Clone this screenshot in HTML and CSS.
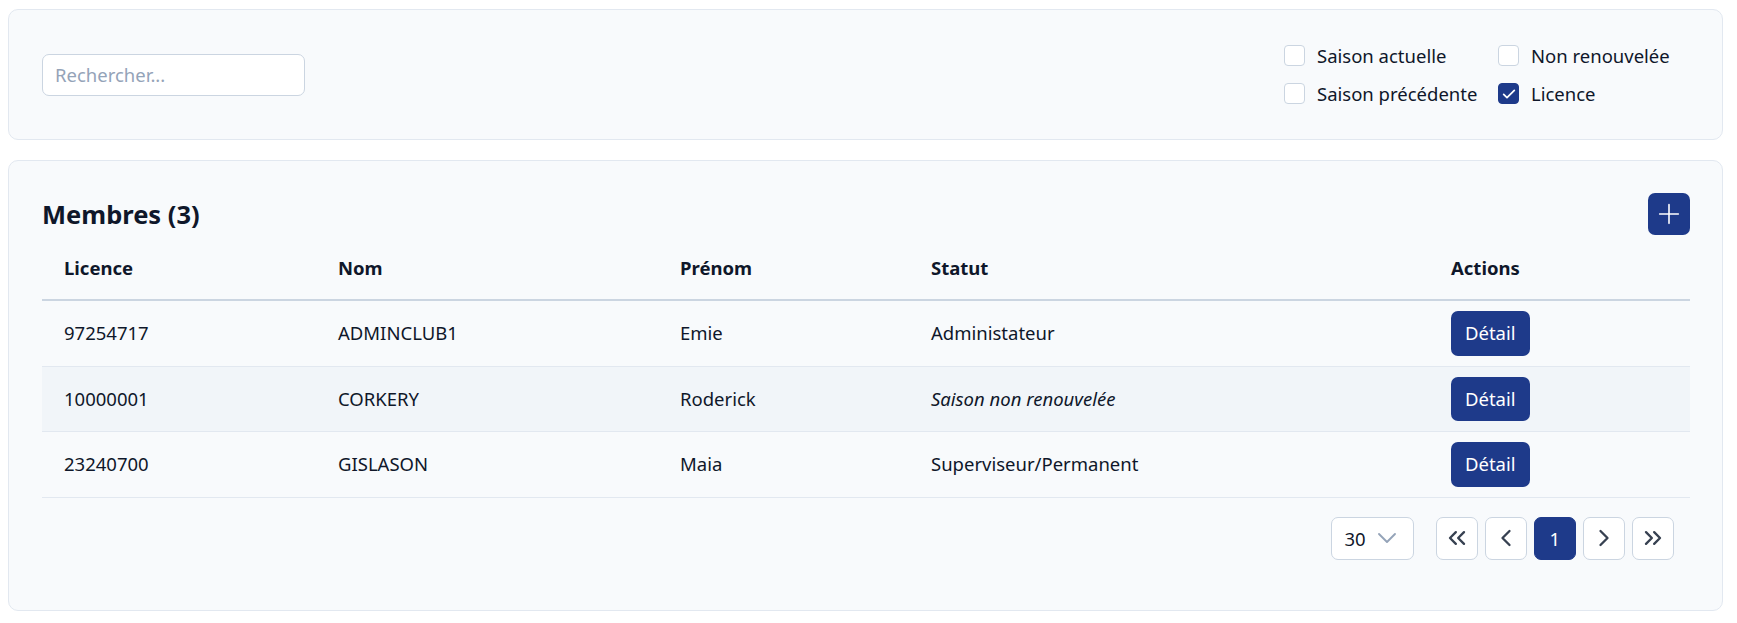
FILE: index.html
```html
<!DOCTYPE html>
<html lang="fr">
<head>
  <meta charset="UTF-8">
  <meta name="viewport" content="width=device-width, initial-scale=1.0">
  <title>Membres</title>
  <link rel="stylesheet" href="styles.css">
</head>
<body>
  <div class="page">
    <!-- Filtres -->
    <section class="card filters">
      <input class="search" type="text" placeholder="Rechercher...">
      <div class="checks">
        <label class="check"><span class="box"></span>Saison actuelle</label>
        <label class="check"><span class="box"></span>Non renouvelée</label>
        <label class="check"><span class="box"></span>Saison précédente</label>
        <label class="check">
          <span class="box on">
            <svg width="16" height="16" viewBox="0 0 24 24" fill="none" stroke="#fff" stroke-width="2.6" stroke-linecap="round" stroke-linejoin="round"><path d="M4 12.5l5 5L20 6.5"/></svg>
          </span>Licence
        </label>
      </div>
    </section>

    <!-- Liste des membres -->
    <section class="card members">
      <div class="members-head">
        <h2>Membres (3)</h2>
        <button class="add" type="button">
          <svg width="32" height="32" viewBox="0 0 24 24" fill="none" stroke="#fff" stroke-width="1.2" stroke-linecap="round"><path d="M12 5v14M5 12h14"/></svg>
        </button>
      </div>

      <table class="members-table">
        <colgroup>
          <col class="col-licence">
          <col class="col-nom">
          <col class="col-prenom">
          <col class="col-statut">
          <col>
        </colgroup>
        <thead>
          <tr>
            <th>Licence</th>
            <th>Nom</th>
            <th>Prénom</th>
            <th>Statut</th>
            <th>Actions</th>
          </tr>
        </thead>
        <tbody>
          <tr>
            <td>97254717</td>
            <td>ADMINCLUB1</td>
            <td>Emie</td>
            <td>Administateur</td>
            <td><button class="detail" type="button">Détail</button></td>
          </tr>
          <tr class="alt">
            <td>10000001</td>
            <td>CORKERY</td>
            <td>Roderick</td>
            <td><em>Saison non renouvelée</em></td>
            <td><button class="detail" type="button">Détail</button></td>
          </tr>
          <tr>
            <td>23240700</td>
            <td>GISLASON</td>
            <td>Maia</td>
            <td>Superviseur/Permanent</td>
            <td><button class="detail" type="button">Détail</button></td>
          </tr>
        </tbody>
      </table>

      <div class="pager">
        <div class="per-page">
          <span>30</span>
          <svg width="32" height="32" viewBox="0 0 24 24" fill="none" stroke="#94a3b8" stroke-width="1.4" stroke-linecap="round" stroke-linejoin="round"><path d="M6 9l6 6 6-6"/></svg>
        </div>
        <div class="pages">
          <button class="pg" type="button">
            <svg width="28" height="28" viewBox="0 0 24 24" fill="none" stroke="currentColor" stroke-width="2" stroke-linecap="round" stroke-linejoin="round"><path d="M11 17l-5-5 5-5M18 17l-5-5 5-5"/></svg>
          </button>
          <button class="pg" type="button">
            <svg width="28" height="28" viewBox="0 0 24 24" fill="none" stroke="currentColor" stroke-width="2" stroke-linecap="round" stroke-linejoin="round"><path d="M15 18l-6-6 6-6"/></svg>
          </button>
          <button class="pg current" type="button">1</button>
          <button class="pg" type="button">
            <svg width="28" height="28" viewBox="0 0 24 24" fill="none" stroke="currentColor" stroke-width="2" stroke-linecap="round" stroke-linejoin="round"><path d="M9 18l6-6-6-6"/></svg>
          </button>
          <button class="pg" type="button">
            <svg width="28" height="28" viewBox="0 0 24 24" fill="none" stroke="currentColor" stroke-width="2" stroke-linecap="round" stroke-linejoin="round"><path d="M13 17l5-5-5-5M6 17l5-5-5-5"/></svg>
          </button>
        </div>
      </div>
    </section>
  </div>
</body>
</html>
```

FILE: styles.css
```css
/* Page membres */
* {
  box-sizing: border-box;
}
body {
  margin: 0;
  font-family: "Noto Sans", "Liberation Sans", sans-serif;
  color: #0f172a;
  background-color: #fff;
}
.page {
  display: flex;
  flex-direction: column;
  gap: 20px;
  padding: 9px 14px 0 8px;
}
.card {
  background-color: #f8fafc;
  border: 1px solid #e2e8f0;
  border-radius: 10px;
}

/* Filtres */
.filters {
  height: 131px;
  padding: 0 32px 0 33px;
  display: flex;
  align-items: center;
  justify-content: space-between;
}
.search {
  width: 263px;
  height: 42px;
  padding: 0 12px;
  border: 1px solid #cbd5e1;
  border-radius: 7px;
  background-color: #fff;
  font: inherit;
  font-size: 18.5px;
  color: #0f172a;
}
.search::placeholder {
  color: #94a3b8;
}
.checks {
  display: grid;
  grid-template-columns: 192px 192px;
  column-gap: 22px;
  row-gap: 8px;
}
.check {
  display: flex;
  align-items: center;
  gap: 12px;
  font-size: 18.5px;
  line-height: 30px;
  white-space: nowrap;
}
.box {
  width: 21px;
  height: 21px;
  flex: none;
  border: 1px solid #cbd5e1;
  border-radius: 4px;
  background-color: #fff;
  display: flex;
  align-items: center;
  justify-content: center;
}
.box.on {
  background-color: #1e3a8a;
  border-color: #1e3a8a;
}

/* Membres */
.members {
  padding: 32px 32px 50px 33px;
}
.members-head {
  height: 42px;
  display: flex;
  align-items: center;
  justify-content: space-between;
}
.members-head h2 {
  margin: 0;
  font-size: 25.5px;
  font-weight: 700;
}
.add {
  width: 42px;
  height: 42px;
  padding: 0;
  border: none;
  border-radius: 7px;
  background-color: #1e3a8a;
  display: flex;
  align-items: center;
  justify-content: center;
  cursor: pointer;
}
.members-table {
  width: 100%;
  border-collapse: collapse;
  table-layout: fixed;
  font-size: 18.5px;
}
.col-licence { width: 274px; }
.col-nom { width: 342px; }
.col-prenom { width: 251px; }
.col-statut { width: 520px; }
.members-table th {
  text-align: left;
  font-weight: 700;
  line-height: 30px;
  padding: 18px 22px 16px;
  border-bottom: 2px solid #cbd5e1;
}
.members-table td {
  line-height: 30px;
  padding: 10px 22px;
  border-bottom: 1px solid #e2e8f0;
  vertical-align: middle;
}
.members-table tr.alt td {
  background-color: #f1f5f9;
}
.detail {
  display: block;
  height: 44.5px;
  padding: 0 14px;
  border: none;
  border-radius: 7px;
  background-color: #1e3a8a;
  color: #fff;
  font: inherit;
  cursor: pointer;
}

/* Pagination */
.pager {
  display: flex;
  justify-content: flex-end;
  gap: 22px;
  margin-top: 19.5px;
  padding-right: 16px;
}
.per-page {
  width: 83px;
  height: 42.5px;
  padding: 0 10px 0 13px;
  border: 1px solid #cbd5e1;
  border-radius: 7px;
  background-color: #fff;
  display: flex;
  align-items: center;
  justify-content: space-between;
  font-size: 18.5px;
}
.pages {
  display: flex;
  gap: 6.5px;
}
.pg {
  width: 42.5px;
  height: 42.5px;
  padding: 0;
  border: 1px solid #cbd5e1;
  border-radius: 7px;
  background-color: #fff;
  color: #374151;
  display: flex;
  align-items: center;
  justify-content: center;
  font: inherit;
  font-size: 18.5px;
  cursor: pointer;
}
.pg.current {
  background-color: #1e3a8a;
  border-color: #1e3a8a;
  color: #fff;
}
```
